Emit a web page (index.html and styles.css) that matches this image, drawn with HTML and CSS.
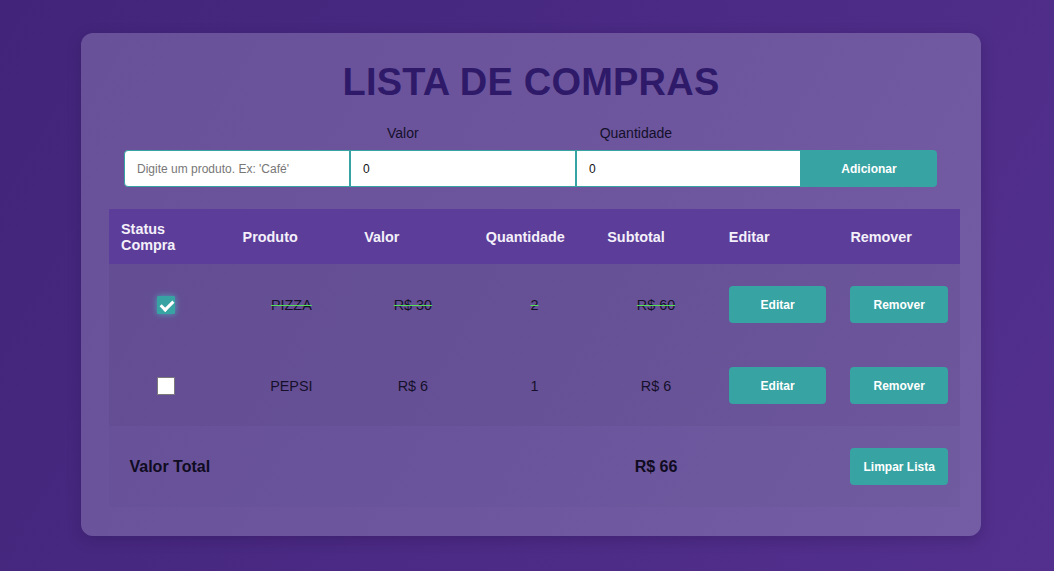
FILE: index.html
```html
<!DOCTYPE html>
<html lang="pt-BR">
<head>
<meta charset="utf-8">
<title>Lista de Compras</title>
<link rel="stylesheet" href="styles.css">
</head>
<body>
<main class="card">
  <h1 class="title">LISTA DE COMPRAS</h1>
  <div class="labels">
    <span class="label label-valor">Valor</span>
    <span class="label label-qtd">Quantidade</span>
  </div>
  <form class="entry">
    <input class="field field-first" type="text" placeholder="Digite um produto. Ex: 'Café'">
    <input class="field" type="text" value="0">
    <input class="field" type="text" value="0">
    <button class="add" type="button">Adicionar</button>
  </form>
  <table class="list">
    <thead>
      <tr>
        <th>Status Compra</th>
        <th>Produto</th>
        <th>Valor</th>
        <th>Quantidade</th>
        <th>Subtotal</th>
        <th>Editar</th>
        <th>Remover</th>
      </tr>
    </thead>
    <tbody>
      <tr class="item done">
        <td><input class="check" type="checkbox" checked></td>
        <td><span class="strike">PIZZA</span></td>
        <td><span class="strike">R$ 30</span></td>
        <td><span class="strike">2</span></td>
        <td><span class="strike">R$ 60</span></td>
        <td><button class="btn" type="button">Editar</button></td>
        <td><button class="btn" type="button">Remover</button></td>
      </tr>
      <tr class="item">
        <td><input class="check" type="checkbox"></td>
        <td>PEPSI</td>
        <td>R$ 6</td>
        <td>1</td>
        <td>R$ 6</td>
        <td><button class="btn" type="button">Editar</button></td>
        <td><button class="btn" type="button">Remover</button></td>
      </tr>
      <tr class="total">
        <td class="total-label">Valor Total</td>
        <td></td>
        <td></td>
        <td></td>
        <td class="total-value">R$ 66</td>
        <td></td>
        <td><button class="btn" type="button">Limpar Lista</button></td>
      </tr>
    </tbody>
  </table>
</main>
</body>
</html>
```
FILE: styles.css
```css
* { box-sizing: border-box; }

html, body {
  margin: 0;
  height: 100%;
}

body {
  font-family: "Liberation Sans", Arial, sans-serif;
  background: linear-gradient(120deg, #42257a 0%, #4a2a84 50%, #53308e 100%);
  overflow: hidden;
}

.card {
  width: 900px;
  margin: 33px 0 0 81px;
  padding: 27px 0 29px;
  border-radius: 12px;
  background: linear-gradient(120deg, #69519a 0%, #6d569e 55%, #745da4 100%);
  box-shadow: 0 4px 14px rgba(30, 10, 60, 0.25);
}

.title {
  margin: 0;
  text-align: center;
  font-size: 38px;
  font-weight: 700;
  color: #2e1a69;
  line-height: 44px;
  letter-spacing: 0.2px;
}

.labels {
  display: flex;
  margin: 21px 0 0 43px;
  width: 813px;
  height: 16px;
}

.label {
  font-size: 14px;
  color: #14102a;
  line-height: 16px;
}

.label-valor { margin-left: 263px; }
.label-qtd { margin-left: 181px; }

.entry {
  display: grid;
  grid-template-columns: 226px 226px 225px 136px;
  margin: 9px 0 0 43px;
  width: 813px;
  height: 37px;
}

.field {
  height: 37px;
  border: 1px solid #37a3a3;
  background: #fff;
  padding: 0 12px;
  font-family: "Liberation Sans", Arial, sans-serif;
  font-size: 12px;
  color: #111;
  outline: none;
  border-radius: 0;
}

.field-first { border-radius: 4px 0 0 4px; }

.field::placeholder { color: #777; }

.add {
  height: 37px;
  border: none;
  border-radius: 0 4px 4px 0;
  background: #37a3a3;
  color: #fff;
  font-family: "Liberation Sans", Arial, sans-serif;
  font-size: 12px;
  font-weight: 700;
}

.list {
  width: 851px;
  margin: 22px 0 0 28px;
  border-collapse: collapse;
  table-layout: fixed;
}

.list th {
  height: 55px;
  padding: 0 12px;
  background: #5c3d99;
  color: #f4f0fa;
  font-size: 14.4px;
  font-weight: 700;
  text-align: left;
  line-height: 16px;
}

.list td {
  height: 81px;
  padding: 0 12px;
  text-align: center;
  font-size: 14.4px;
  color: #15102a;
}

.item { background: rgba(40, 20, 70, 0.08); }
.total { background: rgba(40, 20, 70, 0.03); }

.strike {
  text-decoration: line-through;
  text-decoration-color: #55e05a;
  text-decoration-thickness: 1px;
}

.check {
  appearance: none;
  -webkit-appearance: none;
  width: 18px;
  height: 18px;
  margin: 0 8px 0 0;
  vertical-align: middle;
  background: #fff;
  border: 1px solid #7a7a7a;
  border-radius: 1px;
  position: relative;
}

.check:checked {
  background: #37a3a3;
  border-color: #37a3a3;
  box-shadow: 0 0 6px rgba(70, 200, 200, 0.7);
}

.check:checked::after {
  content: "";
  position: absolute;
  left: 5px;
  top: 1px;
  width: 5px;
  height: 10px;
  border: solid #fff;
  border-width: 0 3px 3px 0;
  transform: rotate(45deg);
}

.btn {
  width: 100%;
  height: 37px;
  border: none;
  border-radius: 4px;
  background: #37a3a3;
  color: #fff;
  font-family: "Liberation Sans", Arial, sans-serif;
  font-size: 12px;
  font-weight: 700;
}

.list td.total-label,
.list td.total-value {
  font-size: 16px;
  font-weight: 700;
  color: #0f0b20;
}

.list td.total-label { padding: 0; }
```
